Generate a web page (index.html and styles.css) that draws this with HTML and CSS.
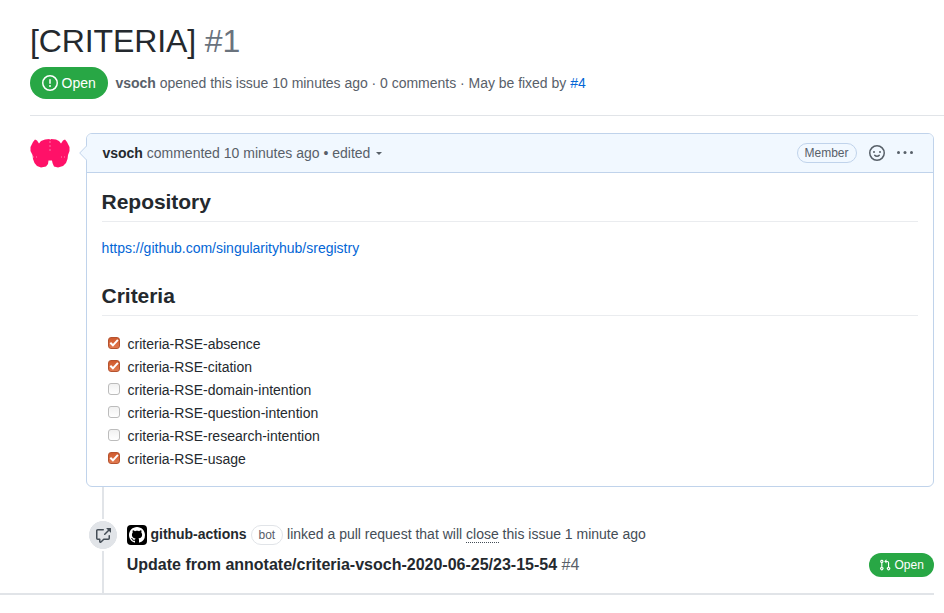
FILE: index.html
```html
<!DOCTYPE html>
<html lang="en">
<head>
<meta charset="utf-8">
<title>[CRITERIA] #1</title>
<link rel="stylesheet" href="styles.css">
</head>
<body>
<header class="issue-header">
  <h1 class="title">[CRITERIA] <span class="number">#1</span></h1>
  <div class="meta">
    <span class="state"><svg width="16" height="16" viewBox="0 0 16 16"><path fill-rule="evenodd" d="M8 1.5a6.5 6.5 0 100 13 6.5 6.5 0 000-13zM0 8a8 8 0 1116 0A8 8 0 010 8zm9 3a1 1 0 11-2 0 1 1 0 012 0zm-.25-6.25a.75.75 0 00-1.5 0v3.5a.75.75 0 001.5 0v-3.5z"/></svg>Open</span>
    <span class="meta-text"><b>vsoch</b> opened this issue 10 minutes ago · 0 comments · May be fixed by <a href="#">#4</a></span>
  </div>
</header>
<main class="timeline">
  <div class="comment-row">
    <svg class="avatar" width="40" height="40" viewBox="0 0 40 40"><path fill="#ff1168" d="M5 6.500L7 7.500 9 10.500 11 8 15 6.500 19.500 6 20 7 21 6 26 6.500 29 8 31 10.500 33 7.500 35 6.500 37 9 39.500 14 39.500 18 38 22 37.500 26 36 30 33 33 28 34.500 24 33.500 22.500 30 22 27.500 18.500 27.500 18 31 16 33.500 11 34.500 7 33 4.500 30 3 26 2.500 22 .5 18 .5 14 3 9z"/><path fill="none" stroke="#ff70a5" stroke-dasharray="2 2" d="M20 8v12"/><path fill="none" stroke="#ffa0c2" stroke-width=".8" stroke-dasharray="1 2" d="M3 24h6M31 24h6"/></svg>
    <article class="comment">
      <svg class="caret" width="8" height="16" viewBox="0 0 8 16"><path fill="#f1f8ff" stroke="#c0d3eb" d="M8 .5L.7 8 8 15.500"/></svg>
      <div class="comment-head">
        <span class="comment-by"><b>vsoch</b> commented 10 minutes ago • edited <i class="dropdown"></i></span>
        <span class="member">Member</span>
        <svg class="smile" width="16" height="16" viewBox="0 0 16 16"><path fill-rule="evenodd" d="M1.500 8a6.500 6.500 0 1113 0 6.500 6.500 0 01-13 0zM8 0a8 8 0 100 16A8 8 0 008 0zM5 8a1 1 0 100-2 1 1 0 000 2zm7-1a1 1 0 11-2 0 1 1 0 012 0z"/><path fill="none" stroke="#586069" stroke-width="1.500" stroke-linecap="round" d="M5.750 10.250C6.800 11.600 9.200 11.600 10.250 10.250"/></svg>
        <svg class="dots" width="16" height="16" viewBox="0 0 16 16"><circle cx="1.500" cy="7.500" r="1.500"/><circle cx="8" cy="7.500" r="1.500"/><circle cx="14.500" cy="7.500" r="1.500"/></svg>
      </div>
      <div class="comment-body">
        <h2>Repository</h2>
        <p><a href="#">https://github.com/singularityhub/sregistry</a></p>
        <h2>Criteria</h2>
        <ul class="tasks">
          <li><span class="check on"><svg width="12" height="12" viewBox="0 0 12 12"><path d="M2.300 5.700L4.900 8.300 9.900 2.800"/></svg></span>criteria-RSE-absence</li>
          <li><span class="check on"><svg width="12" height="12" viewBox="0 0 12 12"><path d="M2.300 5.700L4.900 8.300 9.900 2.800"/></svg></span>criteria-RSE-citation</li>
          <li><span class="check"></span>criteria-RSE-domain-intention</li>
          <li><span class="check"></span>criteria-RSE-question-intention</li>
          <li><span class="check"></span>criteria-RSE-research-intention</li>
          <li><span class="check on"><svg width="12" height="12" viewBox="0 0 12 12"><path d="M2.300 5.700L4.900 8.300 9.900 2.800"/></svg></span>criteria-RSE-usage</li>
        </ul>
      </div>
    </article>
  </div>
  <section class="event">
    <div class="rail"><span class="event-badge"><svg width="16" height="16" viewBox="0 0 16 16"><path fill-rule="evenodd" d="M16 1.250v4.146a.25.25 0 01-.427.177L14.030 4.030l-3.750 3.750a.75.75 0 11-1.060-1.060l3.750-3.750-1.543-1.543A.25.25 0 0111.604 1h4.146a.25.25 0 01.25.25zM2.750 3.500a.25.25 0 00-.25.25v7.500c0 .138.112.25.25.25h2a.75.75 0 01.75.75v2.190l2.720-2.720a.75.75 0 01.53-.22h4.500a.25.25 0 00.25-.25v-2.500a.75.75 0 111.500 0v2.500A1.750 1.750 0 0113.250 13H9.060l-2.573 2.573A1.457 1.457 0 014 14.543V13H2.750A1.750 1.750 0 011 11.250v-7.500C1 2.784 1.784 2 2.750 2h5.500a.75.75 0 010 1.500h-5.500z"/></svg></span></div>
    <div class="event-main">
      <div class="event-line">
        <span class="bot-avatar"><svg width="16" height="16" viewBox="0 0 16 16"><path fill-rule="evenodd" d="M8 0C3.580 0 0 3.580 0 8c0 3.540 2.290 6.530 5.470 7.590.4.070.55-.17.55-.38 0-.19-.01-.82-.01-1.490-2.010.37-2.530-.49-2.690-.94-.09-.23-.48-.94-.82-1.130-.28-.15-.68-.52-.01-.53.63-.01 1.080.58 1.230.82.72 1.210 1.870.87 2.330.66.07-.52.28-.87.51-1.070-1.780-.2-3.640-.89-3.640-3.950 0-.87.31-1.590.82-2.150-.08-.2-.36-1.020.08-2.120 0 0 .67-.21 2.200.82.64-.18 1.320-.27 2-.27.68 0 1.360.09 2 .27 1.530-1.040 2.200-.82 2.200-.82.44 1.100.16 1.920.08 2.120.51.56.82 1.270.82 2.150 0 3.070-1.870 3.750-3.650 3.950.29.25.54.73.54 1.480 0 1.070-.01 1.930-.01 2.200 0 .21.15.46.55.38A8.013 8.013 0 0016 8c0-4.420-3.580-8-8-8z"/></svg></span>
        <b>github-actions</b><span class="bot">bot</span>
        <span class="event-text">linked a pull request that will <span class="close">close</span> this issue 1 minute ago</span>
      </div>
      <div class="pr-line"><div class="pr-title"><b>Update from annotate/criteria-vsoch-2020-06-25/23-15-54</b> <span>#4</span></div>
        <span class="pr-state"><svg width="12" height="12" viewBox="0 0 16 16"><path fill-rule="evenodd" d="M7.177 3.073L9.573.677A.25.25 0 0110 .854v4.792a.25.25 0 01-.427.177L7.177 3.427a.25.25 0 010-.354zM3.750 2.500a.75.75 0 100 1.500.75.75 0 000-1.500zm-2.250.75a2.250 2.250 0 113 2.122v5.256a2.251 2.251 0 11-1.500 0V5.372A2.250 2.250 0 011.500 3.250zM11 2.500h-1V4h1a1 1 0 011 1v5.628a2.251 2.251 0 101.500 0V5A2.500 2.500 0 0011 2.500zm1 10.250a.75.75 0 111.500 0 .75.75 0 01-1.500 0zM3.750 12a.75.75 0 100 1.500.75.75 0 000-1.500z"/></svg>Open</span>
      </div>
    </div>
  </section>
</main>
</body>
</html>
```
FILE: styles.css
```css
* { box-sizing: border-box; }
body {
  margin: 0;
  background: #fff;
  color: #24292e;
  font: 14px/21px "Liberation Sans", Arial, sans-serif;
  overflow: hidden;
}
svg { display: block; fill: currentColor; flex: none; }
a { color: #0366d6; text-decoration: none; }
h1, h2, p, ul { margin: 0; padding: 0; }

.issue-header {
  height: 116px;
  margin-left: 30px;
  padding-top: 23px;
  border-bottom: 1px solid #e1e4e8;
}
.title { font-size: 32px; font-weight: 400; line-height: 36px; letter-spacing: -.12px; }
.number { color: #6a737d; }
.meta { display: flex; align-items: center; gap: 8px; margin-top: 8px; color: #586069; }
.meta-text { margin-left: -.5px; letter-spacing: -.02px; }
.state {
  display: flex;
  align-items: center;
  gap: 3.5px;
  width: 78px;
  height: 32px;
  padding: 0 12px;
  border-radius: 16px;
  background: #28a745;
  color: #fff;
}

.timeline { margin-left: 30px; width: 904px; padding-top: 17px; }
.comment-row { display: flex; gap: 16px; }
.comment {
  position: relative;
  width: 848px;
  height: 354px;
  border: 1px solid #c0d3eb;
  border-radius: 6px;
}
.caret { position: absolute; left: -8px; top: 11px; }
.comment-head {
  display: flex;
  align-items: center;
  height: 39px;
  padding: 0 20px 0 15.4px;
  border-bottom: 1px solid #c0d3eb;
  border-radius: 5px 5px 0 0;
  background: #f1f8ff;
  color: #586069;
}
.comment-head b { color: #24292e; }
.comment-by { flex: 1; }
.dropdown {
  display: inline-block;
  margin-left: 2px;
  vertical-align: 3px;
  border: 3px solid transparent;
  border-top-color: #586069;
  border-bottom: 0;
}
.member {
  width: 60px;
  height: 20px;
  padding: 0 6.5px;
  border: 1px solid #c0d3eb;
  border-radius: 10px;
  font-size: 12px;
  line-height: 18px;
}
.smile { margin-left: 12px; }
.dots { margin-left: 12px; }

.comment-body { padding: 15px 15px 15px 14.6px; }
.comment-body h2 {
  height: 34px;
  border-bottom: 1px solid #eaecef;
  font-size: 21px;
  line-height: 27px;
  letter-spacing: -.04px;
}
.comment-body p { margin: 16px 0 23px; }
.tasks { margin-top: 17px; list-style: none; }
.tasks li { display: flex; align-items: center; height: 23px; padding-left: 6.4px; }
.check {
  width: 12px;
  height: 12px;
  margin: -3px 7.6px 0 0;
  border: 1px solid #bcbcbc;
  border-radius: 3px;
  background: linear-gradient(#f1f1f1, #fff);
}
.check.on { border-color: #b5532f; background: linear-gradient(#cf5a2e, #e27a50); }
.check svg { margin: -1px; fill: none; stroke: #fff; stroke-width: 2; }

.event {
  display: flex;
  height: 108px;
  margin-left: -30px;
  padding-left: 89px;
  border-bottom: 2px solid #e1e4e8;
}
.rail {
  width: 28px;
  margin-right: 10px;
  padding-top: 32px;
  background: linear-gradient(#e1e4e8, #e1e4e8) 13px 0 / 2px 100% no-repeat;
}
.event-badge {
  display: flex;
  align-items: center;
  justify-content: center;
  width: 28px;
  height: 32px;
  border: solid #fff;
  border-width: 2px 0;
  background: radial-gradient(circle, #e1e4e8 13.7px, #fff 14.3px);
  color: #444d56;
}
.event-main { flex: 1; padding-top: 37px; }
.event-line { display: flex; align-items: center; height: 22px; color: #444d56; }
.event-line b { margin: -2px 0 0 3.5px; color: #24292e; letter-spacing: -.03px; }
.event-text { margin-top: -2px; }
.bot-avatar {
  display: grid;
  place-items: center;
  width: 20px;
  height: 20px;
  border-radius: 4px;
  background: #000;
  color: #fff;
}
.bot {
  width: 32px;
  height: 20px;
  margin: 0 4px 0 4.500px;
  padding: 0 6.500px;
  border: 1px solid #e1e4e8;
  border-radius: 10px;
  color: #586069;
  font-size: 12px;
  line-height: 18px;
}
.close { border-bottom: 1px dotted #444d56; }
.pr-line { display: flex; align-items: center; justify-content: space-between; height: 24px; margin-top: 7px; }
.pr-title { font-size: 16px; line-height: 24px; margin-left: -.3px; }
.pr-title span { color: #586069; }
.pr-state {
  display: flex;
  align-items: center;
  gap: 3.500px;
  width: 65px;
  height: 24px;
  padding: 0 10px;
  border-radius: 12px;
  background: #28a745;
  color: #fff;
  font-size: 12px;
}
```
